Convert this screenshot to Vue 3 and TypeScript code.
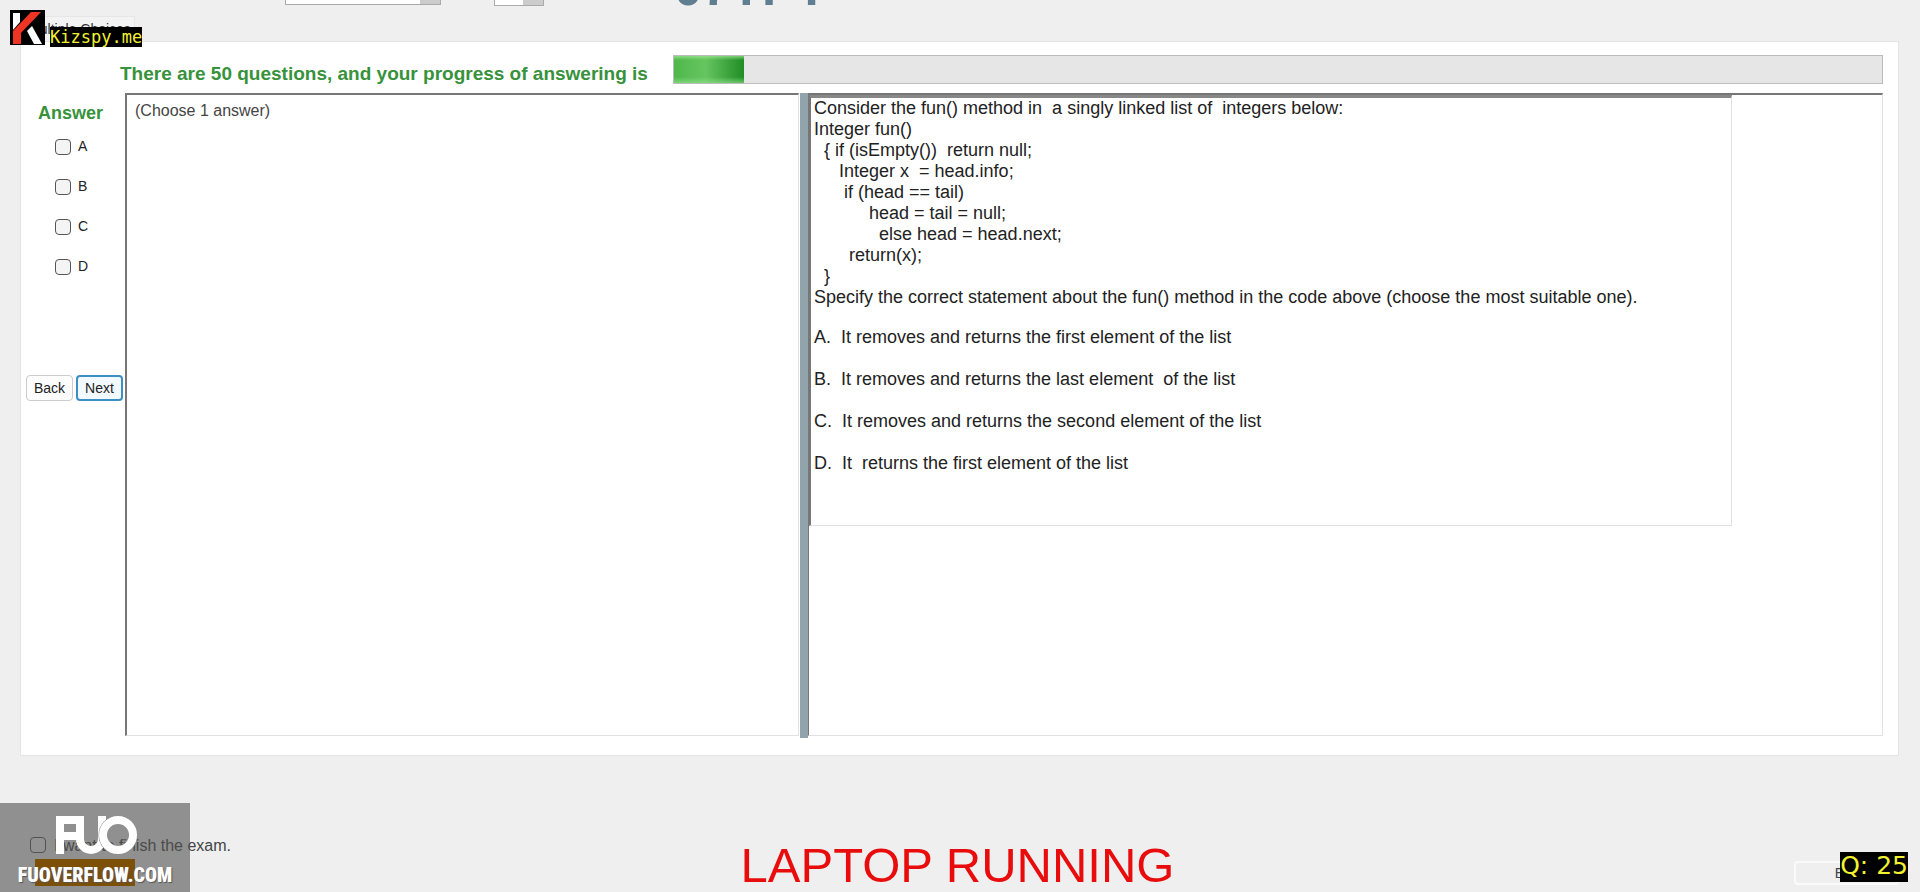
<script setup lang="ts">
import { ref } from 'vue'

const choices = ['A', 'B', 'C', 'D']
const picked = ref<string[]>([])
const finished = ref(false)
const total = 50
const answered = 3

const prompt = [
  'Consider the fun() method in  a singly linked list of  integers below:',
  'Integer fun()',
  '  { if (isEmpty())  return null;',
  '     Integer x  = head.info;',
  '      if (head == tail)',
  '           head = tail = null;',
  '             else head = head.next;',
  '       return(x);',
  '  }',
  'Specify the correct statement about the fun() method in the code above (choose the most suitable one).',
].join('\n')

const options = [
  'A.  It removes and returns the first element of the list',
  'B.  It removes and returns the last element  of the list',
  'C.  It removes and returns the second element of the list',
  'D.  It  returns the first element of the list',
]
</script>

<template>
  <div class="screen">
    <header class="top">
      <select class="combo wide" aria-label="Font"></select>
      <select class="combo small" aria-label="Size"></select>
      <div class="code">07TPT</div>
      <button class="tab" type="button">Multiple Choices</button>
    </header>

    <main class="panel">
      <div class="progress-row">
        <h1 class="heading">There are {{ total }} questions, and your progress of answering is</h1>
        <div class="track" role="progressbar" aria-label="Progress" :aria-valuenow="answered" :aria-valuemax="total">
          <div class="fill" :style="{ width: (answered / total) * 96 + '%' }"></div>
        </div>
      </div>
      <div class="body">
        <aside class="answers">
          <h2 class="answer-title">Answer</h2>
          <label v-for="c in choices" :key="c" class="choice">
            <input v-model="picked" class="box" type="checkbox" :value="c" /><span class="letter">{{ c }}</span>
          </label>
          <div class="nav">
            <button class="btn" type="button">Back</button>
            <button class="btn active" type="button">Next</button>
          </div>
        </aside>
        <section class="pane left">(Choose 1 answer)</section>
        <div class="splitter"></div>
        <section class="pane right">
          <div class="question">
            <pre class="prompt">{{ prompt }}</pre>
            <p v-for="o in options" :key="o" class="option">{{ o }}</p>
          </div>
        </section>
      </div>
    </main>

    <footer class="bottom">
      <label class="finish">
        <input v-model="finished" class="box" type="checkbox" /><span class="finish-text">I want to finish the exam.</span>
      </label>
      <div class="running">LAPTOP RUNNING</div>
      <button class="exit" type="button">Exit</button>
    </footer>

    <div class="brand">
      <svg class="brand-logo" viewBox="0 0 35 35" aria-hidden="true">
        <rect width="35" height="35" fill="#000" />
        <path d="M3 3h7v9l-7 8z" fill="#fff" />
        <path d="M21 2h10L11 23v11H3V21z" fill="#ee3524" />
        <path d="M17 21l5-5 10 18h-8z" fill="#fff" />
      </svg>
      <span class="brand-name">Kizspy.me</span>
    </div>

    <div class="watermark">
      <svg class="fuo" viewBox="0 0 82 40" aria-hidden="true">
        <g fill="none" stroke="#fff" stroke-width="8">
          <path d="M4 39V5H24M4 21H22" />
          <path d="M24 1V24a11 11 0 0 0 22 0V1" />
          <circle cx="62" cy="20" r="15" stroke="#8f8f8f" stroke-width="9" />
          <circle cx="62" cy="20" r="15" />
        </g>
      </svg>
      <div class="site">FUOVERFLOW.COM</div>
    </div>

    <div class="counter">Q: 25</div>
  </div>
</template>

<style>
body {
  margin: 0;
}
</style>

<style scoped>
.screen {
  position: relative;
  box-sizing: border-box;
  min-height: 100vh;
  padding: 0 21px 0 20px;
  overflow: hidden;
  display: flex;
  flex-direction: column;
  background: #efefef;
  color: #222;
  font-family: "Liberation Sans", Arial, sans-serif;
}
.top {
  position: relative;
  height: 41px;
  flex: none;
}
.combo {
  position: absolute;
  height: 24px;
  border: 1px solid #aaa;
  border-radius: 0;
  background: linear-gradient(#ccc, #ccc) right / 20px 100% no-repeat #fff;
  appearance: none;
}
.wide {
  left: 265px;
  top: -19px;
  width: 156px;
}
.small {
  left: 474px;
  top: -18px;
  width: 50px;
}
.code {
  position: absolute;
  left: 654px;
  top: -38px;
  color: #5f7f90;
  font-size: 51px;
  font-weight: 700;
  line-height: 51px;
}
.tab {
  position: absolute;
  left: 4px;
  top: 16px;
  width: 111px;
  height: 25px;
  padding: 0;
  border: 1px solid #e6e6e6;
  border-bottom: 0;
  background: #f3f3f3;
  color: #333;
  font: 14px/22px "Liberation Sans", Arial, sans-serif;
}
.panel {
  flex: none;
  padding: 13px 15px 17px 0;
  border: 1px solid #e4e4e4;
  background: #fff;
}
.progress-row {
  display: flex;
  height: 38px;
  padding-left: 99px;
}
.heading {
  width: 553px;
  flex: none;
  margin: 0;
  color: #37923b;
  font-size: 19px;
  line-height: 38px;
  font-weight: 700;
  white-space: nowrap;
}
.track {
  flex: 1;
  box-sizing: border-box;
  height: 29px;
  border: 1px solid #bcbcbc;
  background: #e6e6e6;
}
.fill {
  height: 100%;
  background:
    linear-gradient(rgba(160, 235, 150, 0.7), transparent 15%, transparent 78%, rgba(150, 230, 145, 0.6)),
    linear-gradient(90deg, #4fb84a, #66c560 45%, #218d25);
}
.body {
  display: flex;
  min-height: 645px;
}
.answers {
  width: 104px;
  flex: none;
}
.answer-title {
  margin: 9px 0 15px 17px;
  color: #37923b;
  font-size: 18px;
  line-height: 22px;
}
.choice {
  display: flex;
  align-items: center;
  gap: 7px;
  height: 16px;
  margin: 0 0 24px 34px;
}
.letter {
  padding-bottom: 2px;
  font-size: 14px;
  line-height: 16px;
}
.box {
  box-sizing: border-box;
  width: 16px;
  height: 16px;
  flex: none;
  margin: 0;
  border: 1px solid #555;
  border-radius: 4px;
  background: #f4f4f4;
  appearance: none;
}
.nav {
  display: flex;
  gap: 3px;
  padding: 76px 0 0 5px;
}
.btn {
  width: 47px;
  height: 26px;
  padding: 0;
  border: 1px solid #ccc;
  border-radius: 4px;
  background: #fdfdfd;
  color: #222;
  font: 14px "Liberation Sans", Arial, sans-serif;
}
.active {
  border: 2px solid #3c8fc4;
  background: #f3faff;
}
.pane {
  box-sizing: border-box;
  margin-bottom: 2px;
  border: 1px solid #e2e2e2;
  border-top: 2px solid #777;
  border-left: 2px solid #777;
}
.left {
  width: 674px;
  flex: none;
  padding: 6px 8px;
  color: #444;
  font-size: 16px;
  line-height: 20px;
}
.splitter {
  width: 8px;
  margin-left: 1px;
  flex: none;
  background: #91a3ab;
}
.right {
  flex: 1;
  border-left: 1px solid #777;
}
.question {
  width: 86%;
  box-sizing: border-box;
  min-height: 431px;
  padding: 0 3px;
  border: 1px solid #e2e2e2;
  border-top: 3px solid #888;
  border-left: 2px solid #777;
  font-size: 18px;
  line-height: 21px;
}
.prompt {
  margin: 0 0 19px;
  font: inherit;
}
.option {
  margin: 0 0 21px;
  white-space: pre;
}
.bottom {
  position: relative;
  display: flex;
  justify-content: center;
  flex: 1;
}
.finish {
  position: absolute;
  left: 10px;
  top: 78px;
  display: flex;
  align-items: center;
  gap: 8px;
  color: #444;
  font-size: 16px;
}
.finish-text {
  padding-top: 3px;
}
.running {
  padding: 83px 4px 0 0;
  color: #e80c0c;
  font-size: 49px;
  line-height: 53px;
  white-space: nowrap;
}
.exit {
  position: absolute;
  right: 0;
  top: 105px;
  width: 105px;
  height: 24px;
  border: 2px solid #fafafa;
  border-radius: 4px;
  background: #efefef;
  color: #444;
  font: 14px "Liberation Sans", Arial, sans-serif;
}
.brand {
  position: absolute;
  left: 10px;
  top: 10px;
  display: flex;
  gap: 5px;
}
.brand-logo {
  width: 35px;
  height: 35px;
}
.brand-name {
  height: 20px;
  margin-top: 17px;
  background: #000;
  color: #f2f230;
  font: 17px/20px "DejaVu Sans Mono", monospace;
}
.watermark {
  position: absolute;
  left: 0;
  bottom: 0;
  width: 190px;
  height: 89px;
  background: rgba(80, 80, 80, 0.6);
}
.fuo {
  position: absolute;
  left: 56px;
  top: 12px;
  width: 82px;
  height: 40px;
}
.site {
  position: absolute;
  left: 0;
  bottom: 6px;
  width: 190px;
  height: 27px;
  text-align: center;
  background: linear-gradient(#7d5008, #7d5008) 35px 0 / 100px 100% no-repeat;
  color: #fff;
  font: 900 20px/32px "Roboto Condensed", "Liberation Sans", sans-serif;
  text-shadow: 1px 1px 1px #555;
}
.counter {
  position: absolute;
  right: 12px;
  bottom: 10px;
  height: 30px;
  background: #000;
  color: #f2f230;
  font: 25px/28px "DejaVu Sans", sans-serif;
}
</style>
